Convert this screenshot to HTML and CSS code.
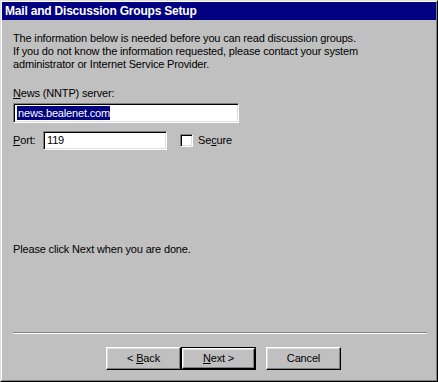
FILE: index.html
```html
<!DOCTYPE html>
<html>
<head>
<meta charset="utf-8">
<link rel="stylesheet" href="styles.css">
</head>
<body>
<div class="window">
  <div class="window-inner">
    <div class="titlebar">Mail and Discussion Groups Setup</div>
    <div class="content">
      <p class="intro">The information below is needed before you can read discussion groups.<br>If you do not know the information requested, please contact your system<br>administrator or Internet Service Provider.</p>
      <div class="label"><u>N</u>ews (NNTP) server:</div>
      <div class="field server"><span class="selected">news.bealenet.com</span></div>
      <div class="port-row">
        <span class="label port-label"><u>P</u>ort:</span>
        <div class="field port">119</div>
        <div class="checkbox"></div>
        <span class="label">Se<u>c</u>ure</span>
      </div>
      <p class="done">Please click Next when you are done.</p>
      <div class="separator"></div>
      <div class="buttons">
        <div class="btn"><span>&lt;&nbsp;<u>B</u>ack</span></div>
        <div class="btn default"><div class="btn-face"><span><u>N</u>ext&nbsp;&gt;</span></div></div>
        <div class="btn cancel"><span>Cancel</span></div>
      </div>
    </div>
  </div>
</div>
</body>
</html>
```

FILE: styles.css
```css
html, body {
  margin: 0;
  padding: 0;
  background: #c0c0c0;
}
body {
  width: 438px;
  height: 382px;
  overflow: hidden;
  font-family: "Liberation Sans", Arial, sans-serif;
  font-size: 11px;
  letter-spacing: -0.16px;
  color: #000;
}
.window {
  box-sizing: border-box;
  width: 438px;
  height: 382px;
  border: 1px solid;
  border-color: #dfdfdf #000 #000 #dfdfdf;
  background: #c0c0c0;
}
.window-inner {
  box-sizing: border-box;
  height: 100%;
  border: 1px solid;
  border-color: #fff #808080 #808080 #fff;
  display: flex;
  flex-direction: column;
}
.titlebar {
  height: 18px;
  line-height: 18px;
  background: #000080;
  color: #fff;
  font-weight: bold;
  font-size: 12px;
  letter-spacing: -0.2px;
  padding-left: 3px;
  white-space: nowrap;
}
.content {
  flex: 1;
  display: flex;
  flex-direction: column;
  padding: 12px 9px 10px 11px;
}
.intro {
  margin: 0;
  line-height: 13px;
  white-space: nowrap;
}
.label {
  line-height: 13px;
  white-space: nowrap;
}
.content > .label {
  margin-top: 16px;
}
.field {
  box-sizing: border-box;
  background: #fff;
  border: 1px solid;
  border-color: #808080 #fff #fff #808080;
  box-shadow: inset 1px 1px #000, inset -1px -1px #dfdfdf;
  padding: 3px 3px 0 3px;
  line-height: 13px;
  white-space: nowrap;
}
.server {
  margin-top: 3px;
  width: 226px;
  height: 20px;
}
.selected {
  background: #000080;
  color: #fff;
  padding: 1px 0 1px 1px;
}
.port-row {
  display: flex;
  align-items: center;
  margin-top: 8px;
  height: 19px;
}
.port-label {
  width: 30px;
}
.port {
  width: 124px;
  height: 19px;
  padding-top: 2px;
}
.checkbox {
  box-sizing: border-box;
  width: 13px;
  height: 13px;
  margin-left: 13px;
  background: #fff;
  border: 1px solid;
  border-color: #808080 #fff #fff #808080;
  box-shadow: inset 1px 1px #000, inset -1px -1px #dfdfdf;
}
.checkbox + .label {
  margin-left: 5px;
}
.done {
  margin: 93px 0 0 0;
  line-height: 13px;
}
.separator {
  margin-top: auto;
  height: 0;
  border-top: 1px solid #808080;
  border-bottom: 1px solid #fff;
}
.buttons {
  display: flex;
  margin-top: 13px;
  padding-left: 93px;
}
.btn {
  box-sizing: border-box;
  width: 75px;
  height: 23px;
  border: 1px solid;
  border-color: #fff #000 #000 #fff;
  box-shadow: inset -1px -1px #808080, inset 1px 1px #dfdfdf;
  display: flex;
  align-items: center;
  justify-content: center;
  line-height: 13px;
  white-space: nowrap;
}
.btn.default {
  border: 1px solid #000;
  box-shadow: none;
  padding: 0;
}
.btn-face {
  box-sizing: border-box;
  width: 100%;
  height: 100%;
  border: 1px solid;
  border-color: #fff #000 #000 #fff;
  box-shadow: inset -1px -1px #808080, inset 1px 1px #dfdfdf;
  display: flex;
  align-items: center;
  justify-content: center;
}
.btn.cancel {
  margin-left: 10px;
}
```
